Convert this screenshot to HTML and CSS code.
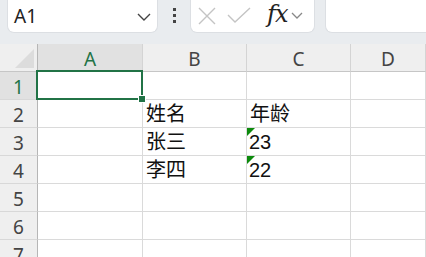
FILE: index.html
```html
<!DOCTYPE html>
<html lang="zh">
<head>
    <meta charset="UTF-8">
    <title>Sheet</title>
    <link rel="stylesheet" href="styles.css">
</head>
<body>
<div class="toolbar">
    <div class="name-box">
        <span>A1</span>
        <svg class="chev" width="14" height="8" viewBox="0 0 14 8"><path d="M1 1l6 6 6-6" fill="none" stroke="#444" stroke-width="1.4"/></svg>
    </div>
    <div class="dots"><i></i><i></i><i></i></div>
    <div class="fn-box">
        <svg width="20" height="20" viewBox="0 0 20 20"><path d="M2 2l16 16M18 2L2 18" stroke="#c4c4c4" stroke-width="1.4"/></svg>
        <svg width="26" height="20" viewBox="0 0 26 20"><path d="M2 9l7 7L24 2" fill="none" stroke="#c4c4c4" stroke-width="1.4"/></svg>
        <span class="fx">fx</span>
        <svg width="12" height="8" viewBox="0 0 12 8"><path d="M1 1l5 5 5-5" fill="none" stroke="#888" stroke-width="1.3"/></svg>
    </div>
    <div class="formula"></div>
</div>
<div class="sheet">
    <div class="hd corner"><div class="tri"></div></div>
    <div class="hd col active">A</div>
    <div class="hd col">B</div>
    <div class="hd col">C</div>
    <div class="hd col">D</div>

    <div class="hd row active">1</div>
    <div class="cell selected"><span class="handle"></span></div>
    <div class="cell"></div>
    <div class="cell"></div>
    <div class="cell"></div>

    <div class="hd row">2</div>
    <div class="cell"></div>
    <div class="cell">姓名</div>
    <div class="cell">年龄</div>
    <div class="cell"></div>

    <div class="hd row">3</div>
    <div class="cell"></div>
    <div class="cell">张三</div>
    <div class="cell num flag">23</div>
    <div class="cell"></div>

    <div class="hd row">4</div>
    <div class="cell"></div>
    <div class="cell">李四</div>
    <div class="cell num flag">22</div>
    <div class="cell"></div>

    <div class="hd row">5</div>
    <div class="cell"></div><div class="cell"></div><div class="cell"></div><div class="cell"></div>
    <div class="hd row">6</div>
    <div class="cell"></div><div class="cell"></div><div class="cell"></div><div class="cell"></div>
    <div class="hd row">7</div>
    <div class="cell"></div><div class="cell"></div><div class="cell"></div><div class="cell"></div>
</div>
</body>
</html>
```

FILE: styles.css
```css
body {
    margin: 0;
    font-family: "Liberation Sans", "Noto Sans CJK SC", sans-serif;
    background: #fff;
    overflow: hidden;
    width: 426px;
    height: 257px;
}

.toolbar {
    height: 44px;
    background: #e9ecef;
    display: flex;
    align-items: flex-start;
}

.name-box,
.fn-box,
.formula {
    height: 33px;
    background: #fff;
    border: 1px solid #dcdfe3;
    border-top: none;
    box-sizing: border-box;
    border-radius: 0 0 7px 7px;
    display: flex;
    align-items: center;
}

.name-box {
    margin-left: 7px;
    width: 151px;
    padding: 0 6px 0 6px;
    justify-content: space-between;
    font-family: "Noto Sans", sans-serif;
    font-size: 19px;
    color: #222;
}

.chev {
    margin-top: 2px;
}

.dots {
    width: 32px;
    display: flex;
    flex-direction: column;
    align-items: center;
    gap: 3px;
    padding-top: 8px;
}

.dots i {
    display: block;
    width: 3px;
    height: 3px;
    background: #444;
}

.fn-box {
    width: 125px;
    padding-left: 6px;
    gap: 9px;
}

.fx {
    font-family: "DejaVu Serif", serif;
    font-style: italic;
    font-size: 24px;
    color: #222;
    margin-left: 6px;
    margin-right: -5px;
    padding-bottom: 4px;
    letter-spacing: -1px;
}

.formula {
    margin-left: 10px;
    flex: 1;
    border-right: none;
    border-radius: 0 0 0 7px;
}

.sheet {
    display: grid;
    grid-template-columns: 38px 105px 104px 104px 1fr;
    grid-template-rows: 28px repeat(7, 28px);
}

.hd {
    background: #efefef;
    color: #444;
    font-family: "Noto Sans", sans-serif;
    font-size: 19px;
    display: flex;
    align-items: center;
    justify-content: center;
    box-sizing: border-box;
}

.col {
    border-right: 1px solid #d4d4d4;
    border-bottom: 1px solid #c6c6c6;
    padding-top: 3px;
}

.row {
    border-right: 1px solid #b6b6b6;
    border-bottom: 1px solid #d8d8d8;
    padding-top: 3px;
}

.corner {
    border-right: 1px solid #b6b6b6;
    border-bottom: 1px solid #c6c6c6;
    position: relative;
}

.tri {
    position: absolute;
    right: 3px;
    bottom: 3px;
    width: 0;
    height: 0;
    border-left: 19px solid transparent;
    border-bottom: 19px solid #dcdcdc;
}

.hd.active {
    background: #e1e1e1;
    color: #217346;
}

.col.active {
    border-bottom: 2px solid #217346;
}

.cell {
    border-right: 1px solid #dadada;
    border-bottom: 1px solid #dadada;
    box-sizing: border-box;
    font-size: 20px;
    color: #111;
    display: flex;
    align-items: flex-end;
    padding: 0 0 0 3px;
    line-height: 25px;
}

.num {
    font-size: 20px;
    padding-left: 2px;
}

.flag {
    position: relative;
}

.flag::before {
    content: "";
    position: absolute;
    left: 0;
    top: 0;
    border-top: 8px solid #0c8a0c;
    border-right: 8px solid transparent;
}

.selected {
    position: relative;
}

.selected::after {
    content: "";
    position: absolute;
    left: -2px;
    top: -2px;
    right: -1px;
    bottom: -1px;
    border: 2px solid #217346;
}

.handle {
    position: absolute;
    right: -4px;
    bottom: -4px;
    width: 6px;
    height: 6px;
    background: #217346;
    border: 1px solid #fff;
    z-index: 2;
}
```
